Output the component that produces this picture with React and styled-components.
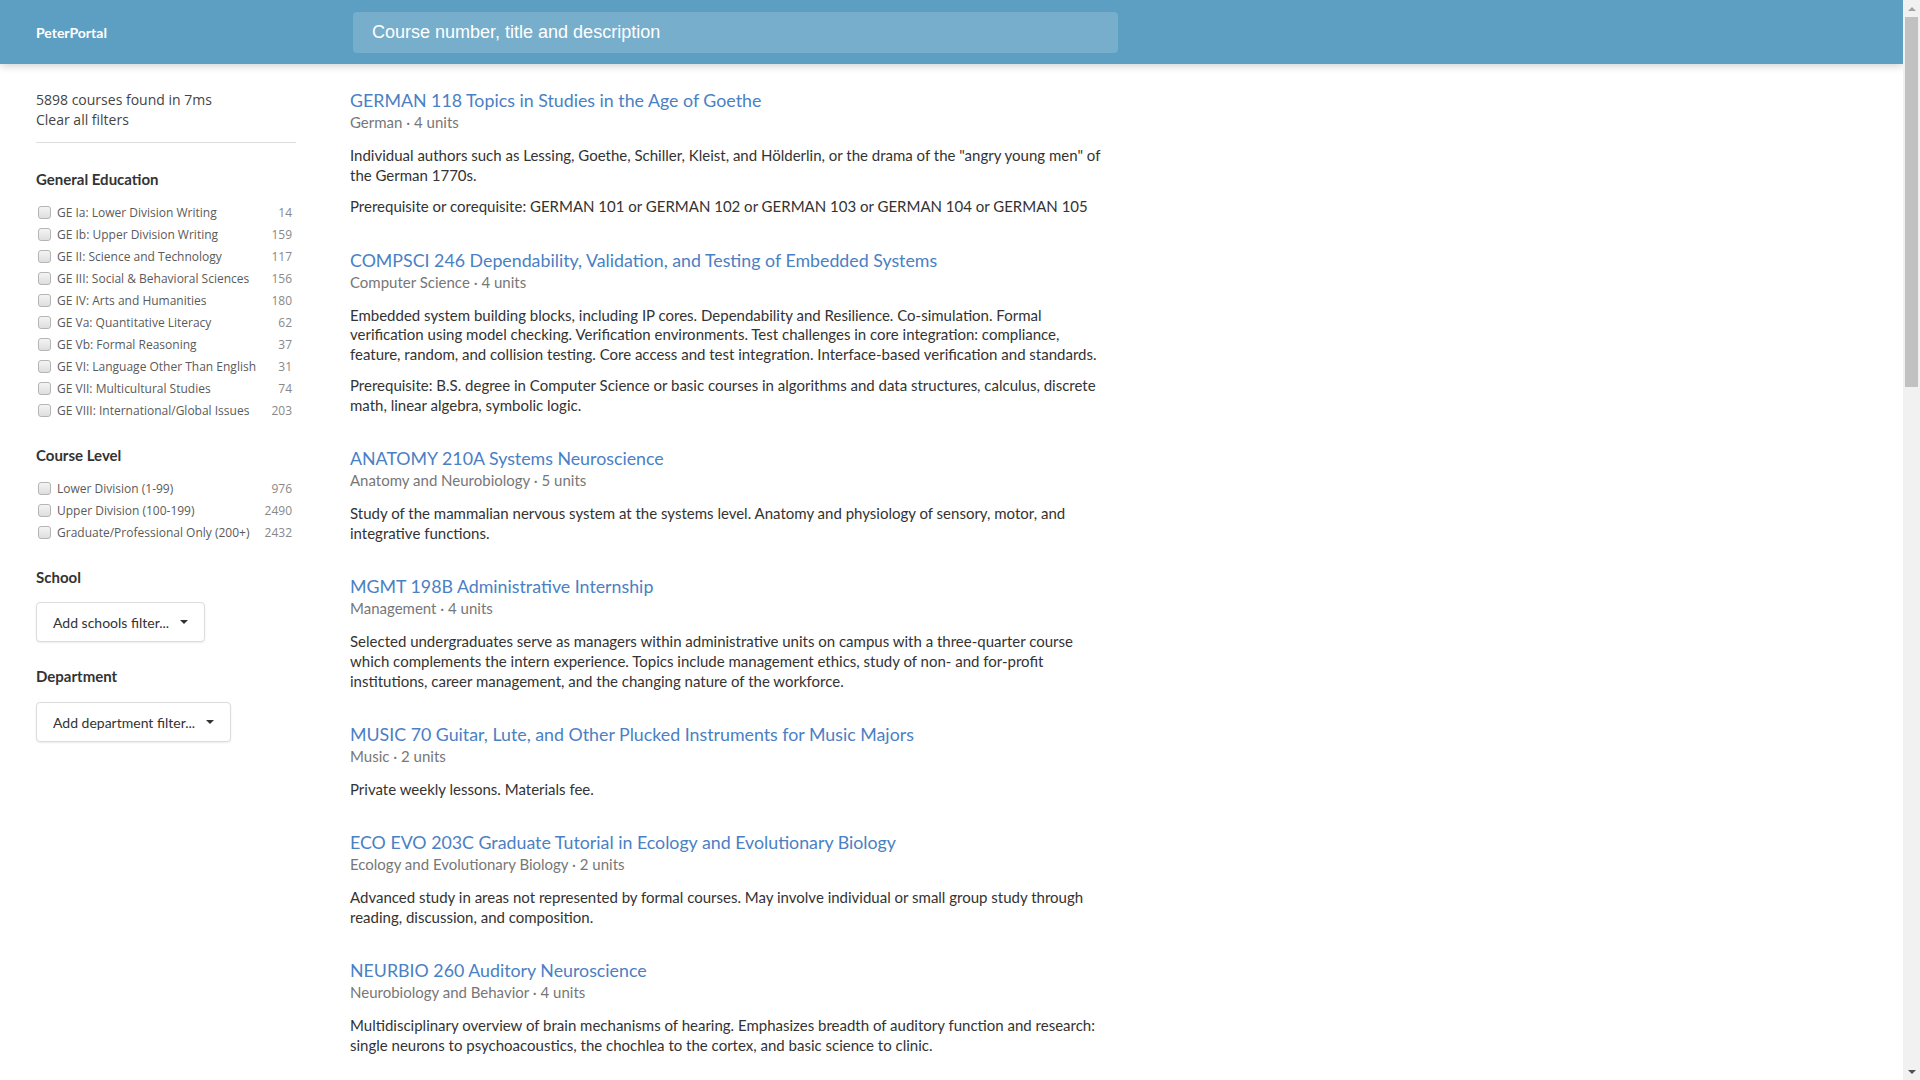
import styled, { createGlobalStyle } from 'styled-components';

const GlobalStyle = createGlobalStyle`
  body {
    margin: 0;
    background: #fff;
    font-family: Lato, "Open Sans", sans-serif;
    color: #333;
  }
`;

const Page = styled.div`
  min-height: 3050px;
  margin-right: 17px;
`;

const Header = styled.header`
  height: 64px;
  background: #5d9fc3;
  box-shadow: 0 2px 8px rgba(0, 0, 0, 0.18);
  display: flex;
  align-items: center;
  position: relative;
  z-index: 1;
`;

const Logo = styled.div`
  width: 317px;
  padding-left: 36px;
  font-family: Lato, sans-serif;
  font-weight: 700;
  font-size: 14px;
  color: #fff;
`;

const Search = styled.input`
  width: 765px;
  height: 41px;
  box-sizing: border-box;
  padding: 0 19px;
  border: none;
  border-radius: 4px;
  background: rgba(255, 255, 255, 0.16);
  font-family: "Liberation Sans", Arial, sans-serif;
  font-size: 18px;
  color: #fff;
  outline: none;
  &::placeholder {
    color: #fff;
    opacity: 1;
  }
`;

const Body = styled.div`
  display: flex;
  padding-left: 36px;
  gap: 54px;
`;

const Sidebar = styled.aside`
  width: 260px;
  padding-top: 26px;
  font-family: "Open Sans", sans-serif;
`;

const Stats = styled.div`
  font-size: 14px;
  line-height: 19.5px;
  color: #444;
  padding-bottom: 13px;
  border-bottom: 1px solid #ddd;
`;

const Section = styled.section`
  padding-top: ${({ first }) => (first ? '26px' : '24px')};
`;

const Heading = styled.h3`
  margin: 0 0 ${({ gap }) => gap || 12}px;
  font-family: Lato, sans-serif;
  font-weight: 700;
  font-size: 15px;
  line-height: 20px;
  color: #333;
`;

const Row = styled.label`
  display: flex;
  align-items: center;
  height: 22px;
  padding: 0 4px 0 2px;
  font-size: 12px;
  color: #5a5a5a;
`;

const Box = styled.span`
  width: 11px;
  height: 11px;
  border: 1px solid #b5b5b5;
  border-radius: 3px;
  background: linear-gradient(#f4f4f4, #dedede);
  margin-right: 6px;
  flex-shrink: 0;
`;

const Label = styled.span`
  flex: 1;
  white-space: nowrap;
`;

const Count = styled.span`
  color: #888;
`;

const Dropdown = styled.button`
  display: flex;
  align-items: center;
  gap: 11px;
  height: 40px;
  padding: 0 16px;
  border: 1px solid #dcdcdc;
  border-radius: 4px;
  background: #fff;
  box-shadow: 0 1px 2px rgba(0, 0, 0, 0.08);
  font-family: Lato, sans-serif;
  font-size: 14px;
  color: #333;
`;

const Results = styled.main`
  width: 760px;
  padding-top: 24px;
  display: flex;
  flex-direction: column;
  gap: 30.8px;
`;

const Course = styled.article``;

const Title = styled.a`
  display: block;
  font-size: 17.8px;
  line-height: 24px;
  color: #4a80c4;
  text-decoration: none;
`;

const Meta = styled.div`
  font-size: 15px;
  line-height: 20px;
  color: #777;
  margin-bottom: 14px;
`;

const Para = styled.p`
  margin: 0;
  font-size: 15px;
  line-height: 19.6px;
  color: #333;
  & + & {
    margin-top: 12px;
  }
`;

const ScrollTrack = styled.div`
  position: fixed;
  top: 0;
  right: 0;
  width: 17px;
  height: 100vh;
  background: #f1f1f1;
  display: flex;
  flex-direction: column;
  z-index: 2;
`;

const ScrollButton = styled.div`
  height: 17px;
  display: flex;
  align-items: center;
  justify-content: center;
`;

const ScrollThumb = styled.div`
  height: 370px;
  margin: 0 2px;
  background: #c1c1c1;
`;

const ScrollRest = styled.div`
  flex: 1;
`;

const Caret = () => (
  <svg width="8" height="4" viewBox="0 0 8 4">
    <polygon points="0,0 8,0 4,4" fill="#333" />
  </svg>
);

const Arrow = ({ up, color }) => (
  <svg width="8" height="4" viewBox="0 0 8 4">
    <polygon points={up ? '0,4 8,4 4,0' : '0,0 8,0 4,4'} fill={color} />
  </svg>
);

const ge = [
  ['GE Ia: Lower Division Writing', 14],
  ['GE Ib: Upper Division Writing', 159],
  ['GE II: Science and Technology', 117],
  ['GE III: Social & Behavioral Sciences', 156],
  ['GE IV: Arts and Humanities', 180],
  ['GE Va: Quantitative Literacy', 62],
  ['GE Vb: Formal Reasoning', 37],
  ['GE VI: Language Other Than English', 31],
  ['GE VII: Multicultural Studies', 74],
  ['GE VIII: International/Global Issues', 203],
];

const levels = [
  ['Lower Division (1-99)', 976],
  ['Upper Division (100-199)', 2490],
  ['Graduate/Professional Only (200+)', 2432],
];

const courses = [
  {
    title: 'GERMAN 118 Topics in Studies in the Age of Goethe',
    dept: 'German',
    units: 4,
    text: [
      'Individual authors such as Lessing, Goethe, Schiller, Kleist, and Hölderlin, or the drama of the "angry young men" of the German 1770s.',
      'Prerequisite or corequisite: GERMAN 101 or GERMAN 102 or GERMAN 103 or GERMAN 104 or GERMAN 105',
    ],
  },
  {
    title: 'COMPSCI 246 Dependability, Validation, and Testing of Embedded Systems',
    dept: 'Computer Science',
    units: 4,
    text: [
      'Embedded system building blocks, including IP cores. Dependability and Resilience. Co-simulation. Formal verification using model checking. Verification environments. Test challenges in core integration: compliance, feature, random, and collision testing. Core access and test integration. Interface-based verification and standards.',
      'Prerequisite: B.S. degree in Computer Science or basic courses in algorithms and data structures, calculus, discrete math, linear algebra, symbolic logic.',
    ],
  },
  {
    title: 'ANATOMY 210A Systems Neuroscience',
    dept: 'Anatomy and Neurobiology',
    units: 5,
    text: [
      'Study of the mammalian nervous system at the systems level. Anatomy and physiology of sensory, motor, and integrative functions.',
    ],
  },
  {
    title: 'MGMT 198B Administrative Internship',
    dept: 'Management',
    units: 4,
    text: [
      'Selected undergraduates serve as managers within administrative units on campus with a three-quarter course which complements the intern experience. Topics include management ethics, study of non- and for-profit institutions, career management, and the changing nature of the workforce.',
    ],
  },
  {
    title: 'MUSIC 70 Guitar, Lute, and Other Plucked Instruments for Music Majors',
    dept: 'Music',
    units: 2,
    text: ['Private weekly lessons. Materials fee.'],
  },
  {
    title: 'ECO EVO 203C Graduate Tutorial in Ecology and Evolutionary Biology',
    dept: 'Ecology and Evolutionary Biology',
    units: 2,
    text: [
      'Advanced study in areas not represented by formal courses. May involve individual or small group study through reading, discussion, and composition.',
    ],
  },
  {
    title: 'NEURBIO 260 Auditory Neuroscience',
    dept: 'Neurobiology and Behavior',
    units: 4,
    text: [
      'Multidisciplinary overview of brain mechanisms of hearing. Emphasizes breadth of auditory function and research: single neurons to psychoacoustics, the chochlea to the cortex, and basic science to clinic.',
    ],
  },
  {
    title: 'PHYSICS 7C Classical Physics',
    dept: 'Physics and Astronomy',
    units: 4,
    text: [
      'Oscillations, waves, sound, electricity and magnetism. Calculus-based introduction for students in the physical sciences and engineering.',
    ],
  },
];

const Checks = ({ items }) =>
  items.map(([name, n]) => (
    <Row key={name}>
      <Box />
      <Label>{name}</Label>
      <Count>{n}</Count>
    </Row>
  ));

export default function App() {
  return (
    <Page>
      <GlobalStyle />
      <Header>
        <Logo>PeterPortal</Logo>
        <Search placeholder="Course number, title and description" />
      </Header>
      <Body>
        <Sidebar>
          <Stats>
            5898 courses found in 7ms
            <br />
            Clear all filters
          </Stats>
          <Section first>
            <Heading>General Education</Heading>
            <Checks items={ge} />
          </Section>
          <Section>
            <Heading>Course Level</Heading>
            <Checks items={levels} />
          </Section>
          <Section>
            <Heading gap={15}>School</Heading>
            <Dropdown>
              Add schools filter...
              <Caret />
            </Dropdown>
          </Section>
          <Section>
            <Heading gap={16}>Department</Heading>
            <Dropdown>
              Add department filter...
              <Caret />
            </Dropdown>
          </Section>
        </Sidebar>
        <Results>
          {courses.map((c) => (
            <Course key={c.title}>
              <Title href="#">{c.title}</Title>
              <Meta>
                {c.dept} · {c.units} units
              </Meta>
              {c.text.map((t) => (
                <Para key={t}>{t}</Para>
              ))}
            </Course>
          ))}
        </Results>
      </Body>
      <ScrollTrack>
        <ScrollButton>
          <Arrow up color="#a3a3a3" />
        </ScrollButton>
        <ScrollThumb />
        <ScrollRest />
        <ScrollButton>
          <Arrow color="#505050" />
        </ScrollButton>
      </ScrollTrack>
    </Page>
  );
}
